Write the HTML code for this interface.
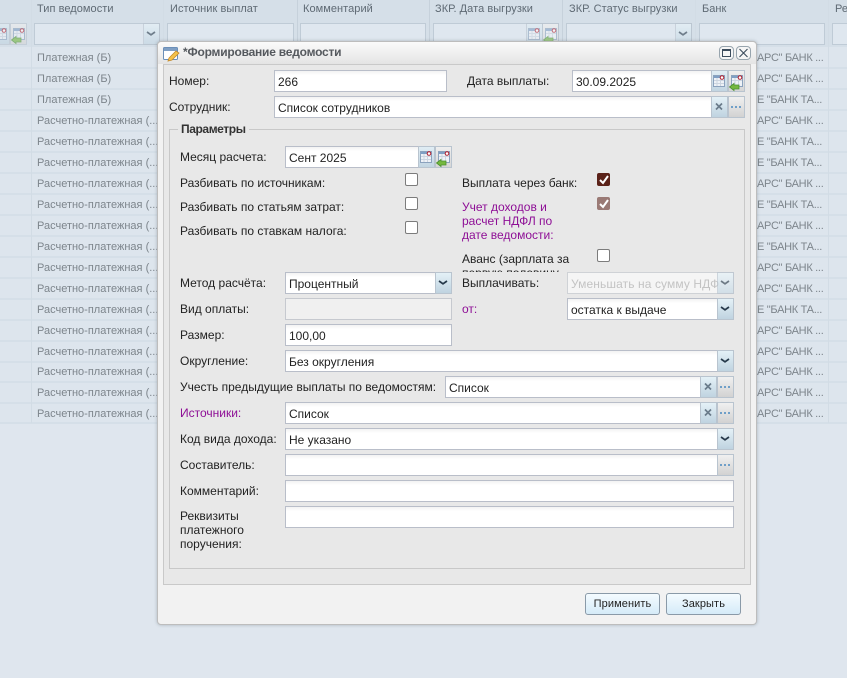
<!DOCTYPE html>
<html><head><meta charset="utf-8"><style>
html,body{margin:0;padding:0}
body{width:847px;height:678px;overflow:hidden;position:relative;background:#dfe6ee;font:12px/14px "Liberation Sans","DejaVu Sans",sans-serif;color:#222}
div,span{position:absolute;box-sizing:border-box;white-space:nowrap}
svg{position:absolute;left:0;top:0}
.u{left:-1px;top:-1px;width:17px;height:22px}
.g{color:#7d858c;left:37px;font-size:11px;margin-top:1px}
.b{color:#7d858c;left:757px;font-size:11px;letter-spacing:-.3px;margin-top:1px}
.h{color:#5f6a74;top:2px;font-size:11px;letter-spacing:.05px}
.rl{left:0;width:847px;height:2px;background:#d5dfe8}
.vl{top:0;width:1px;height:423px;background:#d2dce5}
.hl{top:0;width:1px;height:47px;background:#c6d1db}
.gf{top:23px;height:22px;border:1px solid #bfcbd6;background:#dfe7ef}
.p{color:#8e0f96}
.i{height:22px;border:1px solid #b9bec9;background:linear-gradient(#f3f3f3,#fff 4px);padding:4px 0 0 3px;color:#222}
.ar,.ic,.x,.d{height:22px;width:17px;border:1px solid #b9c4cf}
.ar,.x{background:linear-gradient(#e4f1f7,#bfd3e0)}
.d{background:linear-gradient(#f0f0f0,#d2d2d2)}
.ic{background:linear-gradient(#e0edf4,#c2d5e2)}
.ic2{background:linear-gradient(#efefef,#d6d6d6)}
.c{width:13px;height:13px;border:1px solid #7c7c7c;border-radius:2px;background:#fff}
.c1{background:#5b2219;border-color:#5b2219}
.c2{background:#9a7a75;border-color:#9a7a75}
.btn{top:593px;width:75px;height:22px;border:1px solid #8a9aa8;border-radius:3px;background:linear-gradient(#f4fbff,#d5ebf8);text-align:center;line-height:20px;font-size:11px;letter-spacing:.1px;color:#222}
.f{opacity:.6}
</style></head><body>
<svg width="0" height="0" style="position:absolute">
<symbol id="cal" viewBox="0 0 17 22"><rect x="2.500" y="5.500" width="11" height="11" fill="#eef2f7" stroke="#8ba2bd"/><rect x="3" y="6" width="10" height="2" fill="#7f9fc4"/><path d="M3 10.500H13M3 13.500H13M6 8V16M9.500 8V16" stroke="#ccd5e0" fill="none"/><circle cx="11" cy="7.500" r="1.800" fill="#fff" stroke="#b01c2c"/></symbol>
<symbol id="cal2" viewBox="0 0 17 22"><rect x="3.500" y="5.500" width="11" height="11" fill="#eef2f7" stroke="#8ba2bd"/><rect x="4" y="6" width="10" height="2" fill="#7f9fc4"/><path d="M4 10.500H14M7 8V16M10.500 8V16" stroke="#ccd5e0" fill="none"/><circle cx="12" cy="7.500" r="1.800" fill="#fff" stroke="#b01c2c"/><path d="M1.500 17 L6 13.500 V15 H11 V19 H6 V20.500 Z" fill="#75b83f" stroke="#4b9130" stroke-width=".8"/></symbol>
<symbol id="chev" viewBox="0 0 17 22"><path d="M4 9 L8 11.800 L12 9" stroke="#26394a" stroke-width="1.700" fill="none"/></symbol>
<symbol id="xx" viewBox="0 0 17 22"><path d="M5 7.500 L11 13.500 M11 7.500 L5 13.500" stroke="#6a7b8a" stroke-width="1.700" fill="none"/></symbol>
<symbol id="dd" viewBox="0 0 17 22"><path d="M3 10h2v2h-2zM7 10h2v2h-2zM11 10h2v2h-2z" fill="#6f9fc8"/></symbol>
</svg>
<div style="left:0;top:0;width:847px;height:423px;background:#dde5ed"></div>
<div style="left:0;top:0;width:847px;height:47px;background:#d5dfe8"></div>
<div class="rl" style="top:67px"></div><div class="rl" style="top:88px"></div><div class="rl" style="top:109px"></div><div class="rl" style="top:130px"></div><div class="rl" style="top:151px"></div><div class="rl" style="top:172px"></div><div class="rl" style="top:193px"></div><div class="rl" style="top:214px"></div><div class="rl" style="top:235px"></div><div class="rl" style="top:256px"></div><div class="rl" style="top:277px"></div><div class="rl" style="top:298px"></div><div class="rl" style="top:319px"></div><div class="rl" style="top:340px"></div><div class="rl" style="top:361px"></div><div class="rl" style="top:381px"></div><div class="rl" style="top:402px"></div><div class="rl" style="top:422px"></div>
<div class="vl" style="left:31px"></div><div class="vl" style="left:163px"></div><div class="vl" style="left:695px"></div><div class="vl" style="left:828px"></div>
<div class="hl" style="left:297px"></div><div class="hl" style="left:429px"></div><div class="hl" style="left:562px"></div>
<span class="h" style="left:37px">Тип ведомости</span><span class="h" style="left:170px">Источник выплат</span><span class="h" style="left:303px">Комментарий</span><span class="h" style="left:435px">ЗКР. Дата выгрузки</span><span class="h" style="left:569px">ЗКР. Статус выгрузки</span><span class="h" style="left:702px">Банк</span><span class="h" style="left:835px">Ре</span>
<div class="gf" style="left:34px;width:126px"></div><div class="ar f" style="left:143px;top:23px"><svg class="u"><use href="#chev"/></svg></div>
<div class="gf" style="left:167px;width:127px"></div><div class="gf" style="left:300px;width:126px"></div><div class="gf" style="left:433px;width:126px"></div><div class="gf" style="left:566px;width:126px"></div><div class="ar f" style="left:675px;top:23px"><svg class="u"><use href="#chev"/></svg></div><div class="gf" style="left:699px;width:126px"></div><div class="gf" style="left:832px;width:20px"></div>
<div class="ic f" style="left:-7px;top:23px"><svg class="u"><use href="#cal"/></svg></div><div class="ic ic2 f" style="left:10px;top:23px"><svg class="u"><use href="#cal2"/></svg></div>
<div class="ic f" style="left:526px;top:23px"><svg class="u"><use href="#cal"/></svg></div><div class="ic ic2 f" style="left:542px;top:23px"><svg class="u"><use href="#cal2"/></svg></div>
<span class="g" style="top:50px">Платежная (Б)</span><span class="g" style="top:71px">Платежная (Б)</span><span class="g" style="top:92px">Платежная (Б)</span>
<span class="g" style="top:113px">Расчетно-платежная (...</span><span class="g" style="top:134px">Расчетно-платежная (...</span><span class="g" style="top:155px">Расчетно-платежная (...</span><span class="g" style="top:176px">Расчетно-платежная (...</span><span class="g" style="top:197px">Расчетно-платежная (...</span><span class="g" style="top:218px">Расчетно-платежная (...</span><span class="g" style="top:239px">Расчетно-платежная (...</span><span class="g" style="top:260px">Расчетно-платежная (...</span><span class="g" style="top:281px">Расчетно-платежная (...</span><span class="g" style="top:302px">Расчетно-платежная (...</span><span class="g" style="top:323px">Расчетно-платежная (...</span><span class="g" style="top:344px">Расчетно-платежная (...</span><span class="g" style="top:364px">Расчетно-платежная (...</span><span class="g" style="top:385px">Расчетно-платежная (...</span><span class="g" style="top:406px">Расчетно-платежная (...</span>
<span class="b" style="top:50px">АРС" БАНК ...</span><span class="b" style="top:71px">АРС" БАНК ...</span><span class="b" style="top:92px">Е "БАНК ТА...</span><span class="b" style="top:113px">АРС" БАНК ...</span><span class="b" style="top:134px">Е "БАНК ТА...</span><span class="b" style="top:155px">Е "БАНК ТА...</span><span class="b" style="top:176px">АРС" БАНК ...</span><span class="b" style="top:197px">Е "БАНК ТА...</span><span class="b" style="top:218px">АРС" БАНК ...</span><span class="b" style="top:239px">Е "БАНК ТА...</span><span class="b" style="top:260px">АРС" БАНК ...</span><span class="b" style="top:281px">АРС" БАНК ...</span><span class="b" style="top:302px">Е "БАНК ТА...</span><span class="b" style="top:323px">АРС" БАНК ...</span><span class="b" style="top:344px">АРС" БАНК ...</span><span class="b" style="top:364px">АРС" БАНК ...</span><span class="b" style="top:385px">АРС" БАНК ...</span><span class="b" style="top:406px">АРС" БАНК ...</span>

<div style="left:157px;top:41px;width:600px;height:584px;background:#f2f2f2;border:1px solid #bdbdbd;border-radius:4px;box-shadow:0 0 3px rgba(90,100,110,.4)"></div>
<div style="left:158px;top:42px;width:598px;height:22px;background:linear-gradient(#fbfbfb,#e4e4e4);border-radius:4px 4px 0 0"></div>
<svg width="847" height="678" style="z-index:1"><rect x="163.500" y="47.500" width="14" height="12" rx="1" fill="#fff" stroke="#6b8fb8"/><rect x="164" y="48" width="13" height="3" fill="#7f9fc4"/><path d="M169 58 L176 51 L179 53 L172 60 L168 61 Z" fill="#f4c24a" stroke="#c48a2a" stroke-width=".8"/></svg>
<span style="left:183px;top:45px;font-weight:bold;color:#55595e;letter-spacing:-.22px;z-index:1">*Формирование ведомости</span>
<div style="left:719px;top:46px;width:15px;height:14px;border:1px solid #98a5ae;border-radius:4px;background:#f6f6f6;z-index:1"><div style="left:2px;top:2px;width:9px;height:8px;border:1px solid #3b4c5c;border-top-width:2px"></div></div>
<div style="left:736px;top:46px;width:15px;height:14px;border:1px solid #98a5ae;border-radius:4px;background:#f6f6f6;z-index:1"><svg width="13" height="12"><path d="M2.500 2 L10.500 10 M10.500 2 L2.500 10" stroke="#3b4c5c" stroke-width="1.100" fill="none"/></svg></div>

<div style="left:163px;top:64px;width:588px;height:521px;background:#e8e8e8;border:1px solid #c9c9c9"></div>
<div style="left:169px;top:129px;width:576px;height:440px;border:1px solid #c8c8c8"></div>
<span style="left:178px;top:122px;background:#e8e8e8;padding:0 3px;font-weight:bold;color:#333;letter-spacing:-.4px">Параметры</span>

<span style="left:169px;top:74px">Номер:</span>
<div class="i" style="left:274px;top:70px;width:173px">266</div>
<span style="left:467px;top:74px">Дата выплаты:</span>
<div class="i" style="left:572px;top:70px;width:140px">30.09.2025</div><div class="ic" style="left:711px;top:70px"><svg class="u"><use href="#cal"/></svg></div><div class="ic ic2" style="left:728px;top:70px"><svg class="u"><use href="#cal2"/></svg></div>
<span style="left:169px;top:100px">Сотрудник:</span>
<div class="i" style="left:274px;top:96px;width:438px">Список сотрудников</div><div class="x" style="left:711px;top:96px"><svg class="u"><use href="#xx"/></svg></div><div class="d" style="left:728px;top:96px"><svg class="u"><use href="#dd"/></svg></div>

<span style="left:180px;top:150px">Месяц расчета:</span>
<div class="i" style="left:285px;top:146px;width:134px">Сент 2025</div><div class="ic" style="left:418px;top:146px"><svg class="u"><use href="#cal"/></svg></div><div class="ic ic2" style="left:435px;top:146px"><svg class="u"><use href="#cal2"/></svg></div>
<span style="left:180px;top:176px">Разбивать по источникам:</span><div class="c" style="left:405px;top:173px"></div>
<span style="left:180px;top:200px">Разбивать по статьям затрат:</span><div class="c" style="left:405px;top:197px"></div>
<span style="left:180px;top:224px">Разбивать по ставкам налога:</span><div class="c" style="left:405px;top:221px"></div>
<span style="left:462px;top:176px">Выплата через банк:</span><div class="c c1" style="left:597px;top:173px"></div>
<span class="p" style="left:462px;top:200px">Учет доходов и</span><span class="p" style="left:462px;top:214px">расчет НДФЛ по</span><span class="p" style="left:462px;top:228px">дате ведомости:</span><div class="c c2" style="left:597px;top:197px"></div>
<span style="left:462px;top:252px">Аванс (зарплата за</span><div class="c" style="left:597px;top:249px"></div>
<span style="left:462px;top:266px;height:6px;overflow:hidden">первую половину</span>
<svg width="847" height="678" style="z-index:1"><path d="M600 180 L603 183 L608 176M600 204 L603 207 L608 200" fill="none" stroke="#fff" stroke-width="2"/></svg>

<span style="left:180px;top:276px">Метод расчёта:</span>
<div class="i" style="left:285px;top:272px;width:167px">Процентный</div><div class="ar" style="left:435px;top:272px"><svg class="u"><use href="#chev"/></svg></div>
<span style="left:180px;top:302px">Вид оплаты:</span><div class="i" style="left:285px;top:298px;width:167px;background:#f0f0f0;border-color:#c6c9cf"></div>
<span style="left:180px;top:328px">Размер:</span><div class="i" style="left:285px;top:324px;width:167px">100,00</div>
<span style="left:180px;top:354px">Округление:</span>
<div class="i" style="left:285px;top:350px;width:449px">Без округления</div><div class="ar" style="left:717px;top:350px"><svg class="u"><use href="#chev"/></svg></div>
<span style="left:180px;top:380px">Учесть предыдущие выплаты по ведомостям:</span>
<div class="i" style="left:445px;top:376px;width:289px">Список</div><div class="x" style="left:700px;top:376px"><svg class="u"><use href="#xx"/></svg></div><div class="d" style="left:717px;top:376px"><svg class="u"><use href="#dd"/></svg></div>
<span class="p" style="left:180px;top:406px">Источники:</span>
<div class="i" style="left:285px;top:402px;width:449px">Список</div><div class="x" style="left:700px;top:402px"><svg class="u"><use href="#xx"/></svg></div><div class="d" style="left:717px;top:402px"><svg class="u"><use href="#dd"/></svg></div>
<span style="left:180px;top:432px">Код вида дохода:</span>
<div class="i" style="left:285px;top:428px;width:449px">Не указано</div><div class="ar" style="left:717px;top:428px"><svg class="u"><use href="#chev"/></svg></div>
<span style="left:180px;top:458px">Составитель:</span>
<div class="i" style="left:285px;top:454px;width:449px"></div><div class="d" style="left:717px;top:454px"><svg class="u"><use href="#dd"/></svg></div>
<span style="left:180px;top:484px">Комментарий:</span><div class="i" style="left:285px;top:480px;width:449px"></div>
<span style="left:180px;top:509px">Реквизиты</span><span style="left:180px;top:523px">платежного</span><span style="left:180px;top:537px">поручения:</span>
<div class="i" style="left:285px;top:506px;width:449px"></div>
<span style="left:462px;top:276px;background:#e8e8e8">Выплачивать:</span>
<div class="i" style="left:567px;top:272px;width:167px;background:#f5f5f5;border-color:#cfd2d6;color:#c3c3c3;overflow:hidden;letter-spacing:.1px">Уменьшать на сумму НДФ</div><div class="ar" style="left:717px;top:272px;opacity:.65"><svg class="u"><use href="#chev"/></svg></div>
<span class="p" style="left:462px;top:302px">от:</span>
<div class="i" style="left:567px;top:298px;width:167px">остатка к выдаче</div><div class="ar" style="left:717px;top:298px"><svg class="u"><use href="#chev"/></svg></div>
<div class="btn" style="left:585px">Применить</div><div class="btn" style="left:666px">Закрыть</div>
</body></html>
